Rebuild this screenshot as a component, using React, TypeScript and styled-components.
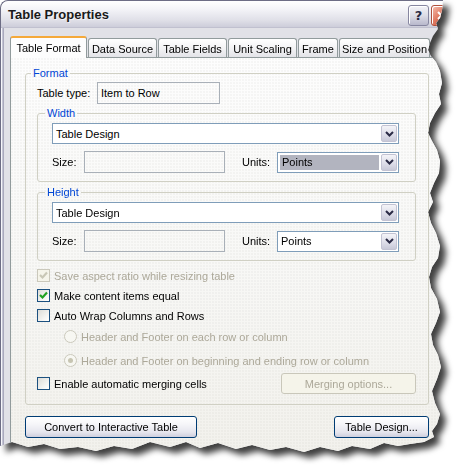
import React from 'react';
import styled, { createGlobalStyle } from 'styled-components';

const GlobalStyle = createGlobalStyle`
  html, body { margin: 0; padding: 0; background: #ffffff; }
  body {
    font-family: "Liberation Sans", Arial, sans-serif;
    font-size: 11px;
    color: #000;
  }
  #root { width: 462px; height: 475px; overflow: hidden; }
`;

const tornPoints: [number, number][] = [
  [0, 0], [443, 0], [442, 10], [440, 18], [436, 23], [438, 29], [433, 36], [430, 43], [428, 50],
  [431, 56], [436, 62], [440, 71], [442, 83], [439, 94], [441, 104], [435, 113], [430, 123],
  [428, 133], [432, 141], [437, 150], [440, 161], [439, 173], [434, 183], [430, 193], [433, 202],
  [428, 212], [431, 223], [436, 233], [440, 246], [438, 258], [432, 267], [429, 277], [431, 288],
  [437, 299], [440, 312], [436, 323], [431, 334], [433, 345], [438, 355], [441, 367], [437, 379],
  [432, 391], [435, 403], [440, 414], [437, 424], [432, 431], [434, 437], [424, 442], [410, 444],
  [398, 446], [384, 443], [370, 449], [352, 446], [338, 451], [320, 447], [304, 452], [286, 447],
  [270, 450], [252, 445], [236, 449], [218, 443], [200, 448], [186, 442], [170, 447], [150, 442],
  [132, 449], [114, 446], [96, 451], [78, 447], [60, 449], [44, 444], [28, 447], [12, 442], [0, 446],
];
const tornClip = `polygon(${tornPoints.map(([x, y]) => `${x}px ${y}px`).join(', ')})`;

const ShadowWrap = styled.div`
  width: 455px;
  height: 462px;
  filter: drop-shadow(6px 6px 3px rgba(0, 0, 0, 0.75));
`;

const Window = styled.div`
  box-sizing: border-box;
  width: 455px;
  height: 462px;
  display: flex;
  flex-direction: column;
  background: #e1e1e7;
  border-left: 1px solid #6d6d85;
  border-top: 1px solid #6d6d85;
  border-top-left-radius: 8px;
  box-shadow: inset 1px 0 0 #f6f6fa, inset 2px 0 0 #c4c4d4, inset 3px 0 0 #a9a9bd;
  clip-path: ${tornClip};
  overflow: hidden;
`;

const TitleBar = styled.div`
  height: 27px;
  flex: none;
  display: flex;
  align-items: center;
  justify-content: space-between;
  padding-left: 7px;
  background: linear-gradient(#ffffff 0%, #f4f4f8 30%, #e0e0e8 70%, #cacad8 100%);
  border-top-left-radius: 7px;
  box-shadow: inset 0 -1px 0 #c0c0cf;
`;

const Title = styled.span`
  font-family: "Liberation Sans", Arial, sans-serif;
  font-weight: bold;
  font-size: 13px;
  color: #1a1a1a;
  text-shadow: 1px 1px 0 rgba(255, 255, 255, 0.6);
`;

const TitleButtons = styled.div`
  display: flex;
  gap: 2px;
  margin-right: 3px;
  margin-top: 2px;
`;

const CaptionButton = styled.div<{ $close?: boolean }>`
  box-sizing: border-box;
  width: 21px;
  height: 21px;
  border-radius: 3px;
  border: 1px solid ${p => (p.$close ? '#b0503c' : '#8686a0')};
  box-shadow: inset 1px 1px 0 #ffffff;
  background: ${p =>
    p.$close
      ? 'linear-gradient(135deg, #f6c0b0 0%, #e07a62 45%, #c8462e 100%)'
      : 'linear-gradient(#f4f4f8 0%, #dcdce6 50%, #b8b8cc 100%)'};
  display: flex;
  align-items: center;
  justify-content: center;
  font-family: "DejaVu Sans", sans-serif;
  font-weight: bold;
  font-size: 13px;
  color: #2a2a44;
`;

const Body = styled.div`
  flex: 1;
  display: flex;
  flex-direction: column;
  padding: 8px 11px 0 9px;
  min-height: 0;
`;

const TabRow = styled.div`
  display: flex;
  align-items: flex-end;
  height: 22px;
  margin-bottom: -1px;
  position: relative;
  z-index: 1;
`;

const Tab = styled.div<{ $active?: boolean; $w: number }>`
  box-sizing: border-box;
  width: ${p => p.$w}px;
  height: ${p => (p.$active ? 22 : 19)}px;
  margin-bottom: ${p => (p.$active ? 0 : 1)}px;
  margin-left: ${p => (p.$active ? 0 : 1)}px;
  display: flex;
  align-items: center;
  justify-content: center;
  white-space: nowrap;
  border: 1px solid #919b9c;
  border-bottom: none;
  border-radius: 3px 3px 0 0;
  background: ${p =>
    p.$active ? '#fdfdfd' : 'linear-gradient(#ffffff 0%, #f2f2f4 55%, #e3e3e8 100%)'};
  border-top: ${p => (p.$active ? '2px solid #f5a93a' : '1px solid #919b9c')};
  padding-top: ${p => (p.$active ? 0 : 1)}px;
  &:first-child { margin-left: 0; }
`;

const TabPage = styled.div`
  flex: 1;
  display: flex;
  flex-direction: column;
  border: 1px solid #919b9c;
  padding: 9px 14px 0 14px;
  background:
    radial-gradient(circle at 1px 1px, rgba(120, 120, 110, 0.05) 1px, transparent 1.6px) 0 0 / 3px 3px,
    linear-gradient(#fdfdfd 0%, #f8f8f6 50%, #f2f1ec 100%);
`;

const Group = styled.fieldset<{ $top?: number }>`
  margin: ${p => p.$top ?? 0}px 0 0 0;
  padding: 0;
  min-width: 0;
  border: 1px solid #d0d0c4;
  border-radius: 3px;
`;

const Legend = styled.legend<{ $offset: number }>`
  margin-left: ${p => p.$offset}px;
  padding: 0 2px;
  line-height: 13px;
  font-size: 11px;
  color: #0046d5;
`;

const GroupContent = styled.div<{ $pad: string }>`
  display: flex;
  flex-direction: column;
  padding: ${p => p.$pad};
`;

const Row = styled.div<{ $top?: number; $indent?: number }>`
  display: flex;
  align-items: center;
  margin-top: ${p => p.$top ?? 0}px;
  padding-left: ${p => p.$indent ?? 0}px;
`;

const Label = styled.span<{ $w?: number; $ml?: number; $disabled?: boolean }>`
  width: ${p => (p.$w ? `${p.$w}px` : 'auto')};
  margin-left: ${p => p.$ml ?? 0}px;
  flex: none;
  white-space: nowrap;
  color: ${p => (p.$disabled ? '#aca899' : '#000')};
`;

const TextBox = styled.div<{ $w: number }>`
  box-sizing: border-box;
  width: ${p => p.$w}px;
  height: 22px;
  border: 1px solid #a9b0b8;
  padding: 0 3px;
  display: flex;
  align-items: center;
  flex: none;
`;

const Select = styled.div`
  box-sizing: border-box;
  flex: 1 1 auto;
  min-width: 0;
  height: 21px;
  border: 1px solid #7f9db9;
  background: #ffffff;
  display: flex;
  align-items: stretch;
`;

const SelectValue = styled.div<{ $highlight?: boolean }>`
  flex: 1;
  display: flex;
  align-items: center;
  padding-left: ${p => (p.$highlight ? 2 : 3)}px;
  margin: ${p => (p.$highlight ? '2px 1px 2px 2px' : '0')};
  background: ${p => (p.$highlight ? '#b2b4bf' : 'transparent')};
`;

const DropButton = styled.div`
  box-sizing: border-box;
  width: 16px;
  margin: 1px;
  border: 1px solid #c3c3d3;
  border-radius: 2px;
  background: linear-gradient(#f4f4f8 0%, #dcdce8 60%, #c8c9d8 100%);
  display: flex;
  align-items: center;
  justify-content: center;
`;

const CheckBox = styled.div<{ $disabled?: boolean }>`
  box-sizing: border-box;
  width: 13px;
  height: 13px;
  flex: none;
  border: 1px solid ${p => (p.$disabled ? '#cac8bb' : '#1c5180')};
  background: ${p =>
    p.$disabled ? '#f5f4ea' : 'linear-gradient(135deg, #dcdcd7 0%, #f6f6f4 70%, #ffffff 100%)'};
  display: flex;
  align-items: center;
  justify-content: center;
`;

const Radio = styled.div`
  box-sizing: border-box;
  width: 13px;
  height: 13px;
  flex: none;
  border-radius: 50%;
  border: 1px solid #cac8bb;
  background: #f7f7f2;
  display: flex;
  align-items: center;
  justify-content: center;
`;

const RadioDot = styled.div`
  width: 5px;
  height: 5px;
  border-radius: 50%;
  background: #c7c5b2;
`;

const OptionText = styled.span<{ $disabled?: boolean; $gap?: number }>`
  margin-left: ${p => p.$gap ?? 4}px;
  white-space: nowrap;
  color: ${p => (p.$disabled ? '#aca899' : '#000')};
`;

const Spacer = styled.div`
  flex: 1;
`;

const PushButton = styled.div<{ $w: number; $disabled?: boolean }>`
  box-sizing: border-box;
  width: ${p => p.$w}px;
  height: ${p => (p.$disabled ? 21 : 22)}px;
  flex: none;
  display: flex;
  align-items: center;
  justify-content: center;
  border-radius: 3px;
  border: 1px solid ${p => (p.$disabled ? '#c9c7ba' : '#003c74')};
  color: ${p => (p.$disabled ? '#aca899' : '#000')};
  background: ${p =>
    p.$disabled
      ? '#f5f4ea'
      : 'linear-gradient(#ffffff 0%, #f6f6f9 35%, #e6e6ee 75%, #cfcfdd 100%)'};
  white-space: nowrap;
`;

const ButtonRow = styled.div`
  display: flex;
  justify-content: space-between;
  margin-top: 11px;
`;

const Chevron = () => (
  <svg width="9" height="6" viewBox="0 0 9 6">
    <polyline points="1,1 4.5,4.5 8,1" fill="none" stroke="#2b2b46" strokeWidth="2" />
  </svg>
);

const Check = ({ color }: { color: string }) => (
  <svg width="9" height="9" viewBox="0 0 9 9">
    <polyline points="1,4 3.5,6.5 8,1.5" fill="none" stroke={color} strokeWidth="2.2" />
  </svg>
);

const CloseGlyph = () => (
  <svg width="9" height="9" viewBox="0 0 9 9">
    <path d="M1 1 L8 8 M8 1 L1 8" stroke="#ffffff" strokeWidth="2" />
  </svg>
);

const DropDown = ({ value, highlight }: { value: string; highlight?: boolean }) => (
  <Select>
    <SelectValue $highlight={highlight}>{value}</SelectValue>
    <DropButton>
      <Chevron />
    </DropButton>
  </Select>
);

const SizeGroup = ({ title, highlight, top }: { title: string; highlight?: boolean; top: number }) => (
  <Group $top={top}>
    <Legend $offset={7}>{title}</Legend>
    <GroupContent $pad="3px 16px 8px 14px">
      <DropDown value="Table Design" />
      <Row $top={7}>
        <Label $w={32}>Size:</Label>
        <TextBox $w={141} />
        <Label $w={35} $ml={17}>Units:</Label>
        <DropDown value="Points" highlight={highlight} />
      </Row>
    </GroupContent>
  </Group>
);

const tabs = [
  { label: 'Table Format', w: 77, active: true },
  { label: 'Data Source', w: 69 },
  { label: 'Table Fields', w: 69 },
  { label: 'Unit Scaling', w: 69 },
  { label: 'Frame', w: 40 },
  { label: 'Size and Position', w: 91 },
];

export default function App() {
  return (
    <>
      <GlobalStyle />
      <ShadowWrap>
        <Window>
          <TitleBar>
            <Title>Table Properties</Title>
            <TitleButtons>
              <CaptionButton>?</CaptionButton>
              <CaptionButton $close>
                <CloseGlyph />
              </CaptionButton>
            </TitleButtons>
          </TitleBar>
          <Body>
            <TabRow>
              {tabs.map(t => (
                <Tab key={t.label} $w={t.w} $active={t.active}>
                  {t.label}
                </Tab>
              ))}
            </TabRow>
            <TabPage>
              <Group>
                <Legend $offset={5}>Format</Legend>
                <GroupContent $pad="2px 12px 10px 11px">
                  <Row>
                    <Label $w={60}>Table type:</Label>
                    <TextBox $w={123}>Item to Row</TextBox>
                  </Row>
                  <SizeGroup title="Width" highlight top={3} />
                  <SizeGroup title="Height" top={4} />
                  <Row $top={8}>
                    <CheckBox $disabled>
                      <Check color="#c9c7b6" />
                    </CheckBox>
                    <OptionText $disabled>Save aspect ratio while resizing table</OptionText>
                  </Row>
                  <Row $top={7}>
                    <CheckBox>
                      <Check color="#21a121" />
                    </CheckBox>
                    <OptionText>Make content items equal</OptionText>
                  </Row>
                  <Row $top={7}>
                    <CheckBox />
                    <OptionText>Auto Wrap Columns and Rows</OptionText>
                  </Row>
                  <Row $top={8} $indent={27}>
                    <Radio />
                    <OptionText $disabled>Header and Footer on each row or column</OptionText>
                  </Row>
                  <Row $top={11} $indent={27}>
                    <Radio>
                      <RadioDot />
                    </Radio>
                    <OptionText $disabled>
                      Header and Footer on beginning and ending row or column
                    </OptionText>
                  </Row>
                  <Row $top={6}>
                    <CheckBox />
                    <OptionText>Enable automatic merging cells</OptionText>
                    <Spacer />
                    <PushButton $w={135} $disabled>
                      Merging options...
                    </PushButton>
                  </Row>
                </GroupContent>
              </Group>
              <ButtonRow>
                <PushButton $w={172}>Convert to Interactive Table</PushButton>
                <PushButton $w={95}>Table Design...</PushButton>
              </ButtonRow>
            </TabPage>
          </Body>
        </Window>
      </ShadowWrap>
    </>
  );
}
